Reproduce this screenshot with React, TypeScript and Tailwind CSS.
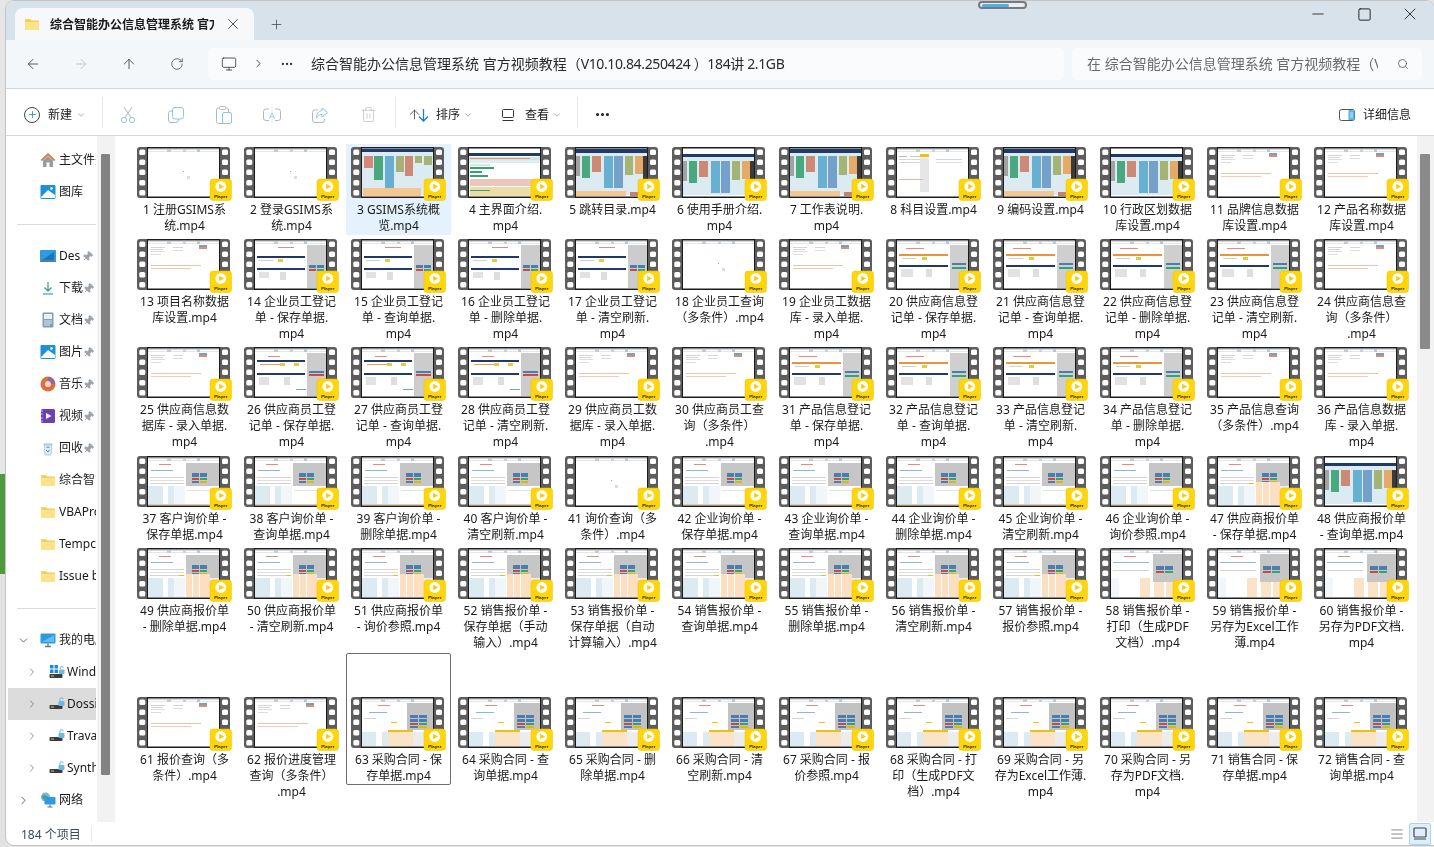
import React from "react";
import { ArrowLeft, ArrowRight, ArrowUp, RotateCw, Monitor, ChevronRight, ChevronDown, Ellipsis, Plus, Trash2, Search, X, Minus, Square, Pin, AlignJustify } from "lucide-react";

const FONT = "font-['Noto_Sans','Noto_Sans_CJK_SC',sans-serif]";

type R = [number, number, number, number, string];

const top: R[] = [[11, 2, 71, 1, "#d4d8dc"], [11, 4, 71, 1, "#e4e6e8"], [30, 2, 4, 3, "#c4ccd4"], [46, 2, 3, 3, "#c8d2dc"], [60, 2, 3, 3, "#b8c8d8"]];
const dashCols = (o: number): R[] => [
  [11, 9 + o, 4, 20, "#a2a2a2"], [17, 9 + o, 8, 22, "#4aa87e"], [27, 9 + o, 9, 16, "#cc8a76"],
  [39, 9 + o, 9, 32, "#68b0d2"], [49, 9 + o, 9, 32, "#74a0ca"], [60, 9 + o, 8, 19, "#a4b474"],
  [70, 9 + o, 8, 18, "#e6aa68"], [78, 9 + o, 4, 34, "#3a3a3a"],
];
const greyRight: R[] = [[63, 6, 19, 43, "#cccccc"], [65, 26, 7, 3, "#4b7db0"], [73, 26, 7, 3, "#4b7db0"], [65, 30, 7, 2, "#c94b3c"], [73, 30, 7, 2, "#35a274"]];
const quoteBase: R[] = [
  ...top, [49, 7, 33, 23, "#c6c6c6"], [55, 17, 7, 4, "#4b7db0"], [63, 17, 7, 4, "#4b7db0"], [55, 22, 7, 2, "#c94b3c"], [63, 22, 7, 2, "#35a274"],
  [55, 25, 7, 2, "#4b7db0"], [63, 25, 7, 2, "#e8b400"], [22, 8, 12, 1, "#e38b7c"], [14, 14, 22, 1, "#8ab8d8"], [13, 21, 34, 1, "#d4d4d4"], [13, 24, 34, 1, "#dedede"], [13, 27, 34, 1, "#d4d4d4"],
];
const THUMBS: Record<string, R[]> = {
  a: [...top, [46, 24, 1, 1, "#8aa8d0"], [50, 29, 3, 3, "#dddddd"]],
  c: [[11, 2, 71, 46, "#dcebf2"], [11, 2, 71, 3, "#1f3a68"], [13, 9, 9, 12, "#d9867a"], [23, 9, 9, 24, "#4aa87e"], [34, 9, 9, 32, "#68aed4"], [45, 9, 8, 16, "#a6b17a"], [54, 9, 8, 20, "#cc8a76"], [64, 9, 7, 7, "#a4b474"], [73, 9, 8, 9, "#a4b474"], [12, 41, 58, 8, "#f4c692"]],
  m: [[11, 2, 71, 4, "#ffffff"], [11, 6, 71, 3, "#1f3a68"], [11, 10, 71, 3, "#cfe3ee"], [11, 13, 71, 3, "#dbeef5"], [12, 11, 60, 1, "#e5996b"], [12, 17, 20, 2, "#d8ead0"], [12, 20, 24, 2, "#35a274"], [12, 24, 12, 2, "#35a274"], [12, 28, 18, 2, "#35a274"], [12, 32, 70, 7, "#ecc6bc"], [12, 40, 70, 9, "#ecdca8"], [12, 43, 20, 1, "#35a274"]],
  d: [[11, 2, 71, 46, "#dcebf2"], [11, 2, 71, 4, "#1f3a68"], ...dashCols(0), [11, 44, 50, 5, "#f4c692"], [65, 45, 15, 4, "#c9806a"]],
  e: [[11, 2, 71, 46, "#dcebf2"], [11, 2, 71, 5, "#ffffff"], [11, 7, 71, 3, "#1f3a68"], ...dashCols(5)],
  s: [...top, [13, 9, 8, 1, "#bbbbbb"], [24, 9, 12, 1, "#c8c8c8"], [13, 12, 24, 1, "#d8d8d8"], [13, 15, 24, 1, "#d8d8d8"], [34, 7, 9, 3, "#f0c010"], [34, 11, 9, 34, "#e6e6e6"], [13, 32, 24, 1, "#eeb8a0"], [50, 12, 26, 1, "#d4d4d4"], [50, 15, 26, 1, "#dedede"]],
  t: [...top, [14, 8, 14, 1, "#d4d4d4"], [14, 10, 12, 1, "#d4d4d4"], [14, 12, 14, 1, "#dcdcdc"], [14, 15, 10, 1, "#dcdcdc"], [36, 8, 10, 1, "#d4d4d4"], [36, 11, 10, 1, "#dcdcdc"], [62, 6, 8, 2, "#6f9fd0"], [62, 8, 8, 2, "#e09060"], [14, 26, 50, 1, "#edc0a8"], [14, 29, 40, 1, "#f0ccb8"]],
  f: [...top, ...greyRight, [34, 8, 16, 1, "#e38b7c"], [13, 17, 48, 2, "#1f3a68"], [13, 29, 48, 2, "#1f3a68"], [15, 21, 14, 1, "#cfcfcf"], [34, 20, 5, 3, "#e8c840"], [15, 33, 10, 6, "#e2e2e2"], [36, 33, 6, 8, "#dedede"]],
  n: [...top, [63, 6, 19, 43, "#cccccc"], [65, 24, 15, 2, "#4b7db0"], [65, 27, 15, 2, "#c94b3c"], [24, 9, 12, 1, "#e38b7c"], [13, 13, 48, 2, "#1f3a68"], [13, 26, 48, 2, "#1f3a68"], [16, 17, 24, 1, "#e8a060"], [36, 16, 5, 3, "#e8c840"], [50, 16, 5, 3, "#e8c840"], [15, 30, 10, 8, "#e2e2e2"], [40, 30, 6, 8, "#dedede"], [52, 42, 10, 1, "#6f9fd0"]],
  o: [...top, [64, 6, 18, 43, "#cfcfcf"], [66, 24, 14, 2, "#4b7db0"], [66, 28, 14, 2, "#35a274"], [20, 9, 18, 1, "#e38b7c"], [13, 15, 49, 2, "#e8943a"], [13, 26, 49, 2, "#1f3a68"], [16, 19, 14, 1, "#cfcfcf"], [36, 18, 5, 3, "#e8c840"], [15, 30, 12, 8, "#e2e2e2"], [40, 30, 6, 8, "#dedede"]],
  q: [...quoteBase, [11, 30, 15, 19, "#dcebf2"], [26, 30, 5, 19, "#ffffff"], [31, 30, 6, 19, "#dcebf2"], [37, 30, 11, 19, "#f0f6fa"], [49, 30, 33, 19, "#ffffff"], [50, 34, 30, 1, "#e2e2e2"], [11, 48, 71, 1, "#f0c89c"]],
  r: [...quoteBase, [49, 26, 24, 23, "#fbdfc0"], [73, 30, 9, 19, "#eeeeee"], [55, 26, 1, 23, "#ffffff"], [62, 26, 1, 23, "#ffffff"], [11, 30, 15, 19, "#dcebf2"], [26, 30, 5, 19, "#ffffff"], [31, 30, 6, 19, "#dcebf2"], [37, 30, 11, 19, "#f0f6fa"], [42, 27, 5, 1, "#f0c010"]],
  p: [...top, [53, 6, 29, 28, "#c6c6c6"], [56, 18, 8, 4, "#4b7db0"], [65, 18, 8, 4, "#4b7db0"], [56, 23, 8, 2, "#c94b3c"], [65, 23, 8, 2, "#35a274"], [24, 8, 12, 1, "#e38b7c"], [13, 14, 36, 1, "#8ab8d8"], [13, 22, 36, 1, "#d4d4d4"], [11, 30, 8, 19, "#f0f6fa"], [40, 30, 10, 19, "#fbe3c8"], [54, 34, 10, 15, "#fbe3c8"], [66, 34, 8, 15, "#fbe3c8"]],
  k: [...top, [56, 6, 26, 27, "#c2c2c2"], [59, 18, 8, 3, "#4b7db0"], [68, 18, 8, 3, "#4b7db0"], [59, 22, 8, 3, "#4b7db0"], [68, 22, 8, 3, "#4b7db0"], [59, 26, 8, 2, "#c94b3c"], [68, 26, 8, 2, "#35a274"], [59, 29, 8, 2, "#4b7db0"], [68, 29, 8, 2, "#e8b400"], [27, 8, 12, 1, "#e38b7c"], [18, 15, 18, 1, "#8ab8d8"], [13, 21, 12, 1, "#d4d4d4"], [40, 25, 6, 1, "#f0c010"], [11, 35, 14, 14, "#dcebf2"], [25, 35, 6, 14, "#ffffff"], [31, 35, 6, 14, "#dcebf2"], [37, 35, 25, 14, "#fbe3c8"], [37, 33, 25, 2, "#f0c010"], [62, 35, 20, 14, "#ececec"]],
};

const HOLES = [2.5, 12.5, 22.5, 33, 43];

function Thumb({ kind }: { kind: string }) {
  return (
    <svg width="95" height="54" viewBox="0 0 95 54" className="block">
      <rect x="0" y="0" width="93" height="51" rx="3" fill="#5d5d5d" />
      {HOLES.map((y) => (
        <g key={y}>
          <rect x="2.3" y={y} width="6" height="5.5" rx="1.6" fill="#fff" />
          <rect x="85" y={y} width="6" height="5.5" rx="1.6" fill="#fff" />
        </g>
      ))}
      <rect x="10" y="0" width="73" height="51" fill="#1c1c1c" />
      <rect x="11" y="1.5" width="71" height="48" fill="#fff" />
      {THUMBS[kind].map((r, i) => (
        <rect key={i} x={r[0]} y={r[1]} width={r[2]} height={r[3]} fill={r[4]} />
      ))}
      <rect x="73" y="32" width="21.5" height="21.5" rx="3" fill="#ffd60a" stroke="#e8c30a" strokeWidth="0.5" />
      <circle cx="83.8" cy="39.5" r="5.4" fill="#fff" />
      <path d="M82.2 36.8 L87 39.5 L82.2 42.2 Z" fill="#ffc800" />
      <text x="83.8" y="50.6" textAnchor="middle" fontSize="4.4" fontWeight="700" fontFamily="Liberation Sans, sans-serif" fill="#222">Player</text>
    </svg>
  );
}

const KINDS = "aacmdedsdett" + "tffffatoooot" + "tnnnttoooott" + "qqqqaqqqqqre" + "rrrrrrrrrppp" + "ttkkkkkkkkkk";

const NAMES = [
  "1 注册GSIMS系|统.mp4", "2 登录GSIMS系|统.mp4", "3 GSIMS系统概|览.mp4", "4 主界面介绍.|mp4", "5 跳转目录.mp4", "6 使用手册介绍.|mp4", "7 工作表说明.|mp4", "8 科目设置.mp4", "9 编码设置.mp4", "10 行政区划数据|库设置.mp4", "11 品牌信息数据|库设置.mp4", "12 产品名称数据|库设置.mp4",
  "13 项目名称数据|库设置.mp4", "14 企业员工登记|单 - 保存单据.|mp4", "15 企业员工登记|单 - 查询单据.|mp4", "16 企业员工登记|单 - 删除单据.|mp4", "17 企业员工登记|单 - 清空刷新.|mp4", "18 企业员工查询|（多条件）.mp4", "19 企业员工数据|库 - 录入单据.|mp4", "20 供应商信息登|记单 - 保存单据.|mp4", "21 供应商信息登|记单 - 查询单据.|mp4", "22 供应商信息登|记单 - 删除单据.|mp4", "23 供应商信息登|记单 - 清空刷新.|mp4", "24 供应商信息查|询（多条件）|.mp4",
  "25 供应商信息数|据库 - 录入单据.|mp4", "26 供应商员工登|记单 - 保存单据.|mp4", "27 供应商员工登|记单 - 查询单据.|mp4", "28 供应商员工登|记单 - 清空刷新.|mp4", "29 供应商员工数|据库 - 录入单据.|mp4", "30 供应商员工查|询（多条件）|.mp4", "31 产品信息登记|单 - 保存单据.|mp4", "32 产品信息登记|单 - 查询单据.|mp4", "33 产品信息登记|单 - 清空刷新.|mp4", "34 产品信息登记|单 - 删除单据.|mp4", "35 产品信息查询|（多条件）.mp4", "36 产品信息数据|库 - 录入单据.|mp4",
  "37 客户询价单 -|保存单据.mp4", "38 客户询价单 -|查询单据.mp4", "39 客户询价单 -|删除单据.mp4", "40 客户询价单 -|清空刷新.mp4", "41 询价查询（多|条件）.mp4", "42 企业询价单 -|保存单据.mp4", "43 企业询价单 -|查询单据.mp4", "44 企业询价单 -|删除单据.mp4", "45 企业询价单 -|清空刷新.mp4", "46 企业询价单 -|询价参照.mp4", "47 供应商报价单|- 保存单据.mp4", "48 供应商报价单|- 查询单据.mp4",
  "49 供应商报价单|- 删除单据.mp4", "50 供应商报价单|- 清空刷新.mp4", "51 供应商报价单|- 询价参照.mp4", "52 销售报价单 -|保存单据（手动|输入）.mp4", "53 销售报价单 -|保存单据（自动|计算输入）.mp4", "54 销售报价单 -|查询单据.mp4", "55 销售报价单 -|删除单据.mp4", "56 销售报价单 -|清空刷新.mp4", "57 销售报价单 -|报价参照.mp4", "58 销售报价单 -|打印（生成PDF|文档）.mp4", "59 销售报价单 -|另存为Excel工作|薄.mp4", "60 销售报价单 -|另存为PDF文档.|mp4",
  "61 报价查询（多|条件）.mp4", "62 报价进度管理|查询（多条件）|.mp4", "63 采购合同 - 保|存单据.mp4", "64 采购合同 - 查|询单据.mp4", "65 采购合同 - 删|除单据.mp4", "66 采购合同 - 清|空刷新.mp4", "67 采购合同 - 报|价参照.mp4", "68 采购合同 - 打|印（生成PDF文|档）.mp4", "69 采购合同 - 另|存为Excel工作薄.|mp4", "70 采购合同 - 另|存为PDF文档.|mp4", "71 销售合同 - 保|存单据.mp4", "72 销售合同 - 查|询单据.mp4",
];

function Cell({ name, kind, index }: { name: string; kind: string; index: number }) {
  const lastRow = index >= 60;
  const selected = index === 2;
  const focused = index === 62;
  return (
    <div className={`flex flex-col items-center ${lastRow ? "pt-[44px]" : "pt-[3px]"} ${selected ? "bg-[#e3f2fd] h-[91px]" : ""} ${focused ? "rounded-[2px] outline outline-1 -outline-offset-1 outline-[#6e6e6e]" : ""}`}>
      <div className="h-[54px] w-[95px]">
        <Thumb kind={kind} />
      </div>
      <div className="pt-px text-center text-[12px] leading-[16px] text-[#1a1a1a]">
        {name.split("|").map((l, i) => (
          <div key={i} className="whitespace-nowrap">{l}</div>
        ))}
      </div>
    </div>
  );
}

const S = ({ children }: { children: React.ReactNode }) => (
  <svg width="16" height="16" viewBox="0 0 16 16" className="shrink-0">{children}</svg>
);
const Img = () => (
  <S><rect x="0.5" y="1" width="15" height="14" rx="1" fill="#1b8fe0" /><path d="M1 13 L8 6 L15 11 V14 H1Z" fill="#fff" /><circle cx="11.5" cy="4.5" r="1.4" fill="#cfe9fb" /></S>
);
const Folder = () => (
  <S><path d="M1 4 a1 1 0 0 1 1-1 h4 l1.5 1.5 H14 a1 1 0 0 1 1 1 V13 a1 1 0 0 1-1 1 H2 a1 1 0 0 1-1-1Z" fill="#f6cf5a" /><path d="M1 6 H15 V13 a1 1 0 0 1-1 1 H2 a1 1 0 0 1-1-1Z" fill="#fbe38a" /></S>
);
const Drive = () => (
  <S><rect x="0.5" y="9" width="13" height="4" rx="1" fill="#3c3c3c" /><rect x="2" y="10.5" width="3" height="1" fill="#9be26a" /><rect x="9.5" y="5" width="6" height="5" rx="1" fill="#6fb7e8" /><path d="M11 5 V3.2 a1.6 1.6 0 0 1 3.2 0" stroke="#6fb7e8" fill="none" /></S>
);
const ICONS: Record<string, React.ReactNode> = {
  home: <S><path d="M8 1 L15.5 8 L14 9 L8 3.6 L2 9 L0.5 8Z" fill="#d87a3a" /><path d="M3 8.5 L8 4 L13 8.5 V15 H9.5 V10.5 H6.5 V15 H3Z" fill="#9a9a9a" /></S>,
  img: <Img />,
  desk: <S><rect x="0" y="2" width="16" height="11" rx="1" fill="#2f9ae0" /><path d="M2 12 L14 4 V12Z" fill="#1876c0" /><rect x="0" y="12.5" width="16" height="1.5" fill="#5a7a90" /></S>,
  down: <S><path d="M8 2 V11 M4.5 7.5 L8 11 L11.5 7.5" stroke="#2fa37c" strokeWidth="1.2" fill="none" /><path d="M3 14 H13" stroke="#5bb8d0" strokeWidth="1.4" /></S>,
  doc: <S><rect x="2.5" y="0.5" width="11" height="15" rx="1" fill="#7f9fb8" /><rect x="4" y="2" width="8" height="5" fill="#eaf1f6" /><path d="M4 9 H12 M4 11 H12 M4 13 H10" stroke="#eaf1f6" strokeWidth="0.9" /></S>,
  music: <S><circle cx="8" cy="8" r="7.5" fill="#d9713f" /><circle cx="8" cy="8" r="3" fill="#f4d7c4" /><path d="M8 1 A7 7 0 0 1 15 8 H11 A3 3 0 0 0 8 5Z" fill="#8b6aa8" /></S>,
  video: <S><rect x="1" y="1" width="14" height="14" rx="1.5" fill="#6a40b8" /><path d="M6 5 L11.5 8 L6 11Z" fill="#fff" /><path d="M1 3 H3 M1 6 H3 M1 10 H3 M1 13 H3" stroke="#cbb8ea" /></S>,
  bin: <S><path d="M4 5 H12 L11 15 H5Z" fill="#dfeaf2" stroke="#9bb3c4" strokeWidth="0.6" /><path d="M6.5 8 L8 6.5 L9.5 8 M9.5 10 L8 12 L6 10" stroke="#2f8fd8" fill="none" /><path d="M3.5 4 H12.5" stroke="#9bb3c4" /></S>,
  folder: <Folder />,
  pc: <S><rect x="0.5" y="1.5" width="15" height="10" rx="1" fill="#2f9ae0" /><path d="M2 10 L14 3 V10Z" fill="#63bdf0" /><path d="M8 11.5 V14 M5 14.5 H11" stroke="#5a7a90" strokeWidth="1.3" /></S>,
  win: <S><path d="M1 1 H4.5 V4.5 H1Z M5.5 1 H9 V4.5 H5.5Z M1 5.5 H4.5 V9 H1Z M5.5 5.5 H9 V9 H5.5Z" fill="#1e88d8" /><rect x="0.5" y="10" width="13" height="4" rx="1" fill="#3c3c3c" /><rect x="2" y="11.5" width="3" height="1" fill="#9be26a" /><rect x="10" y="5.5" width="5.5" height="4.5" rx="1" fill="#6fb7e8" /><path d="M11.2 5.5 V4 a1.5 1.5 0 0 1 3 0" stroke="#6fb7e8" fill="none" /></S>,
  drive: <Drive />,
  net: <S><circle cx="5.5" cy="5" r="4.5" fill="#6fb7e8" /><path d="M2 4 Q5 2 8 5 Q6 8 3 7Z" fill="#55a34a" /><rect x="4.5" y="5" width="11" height="7.5" rx="0.8" fill="#2f9ae0" /><path d="M10 12.5 V15 M7.5 15 H12.5" stroke="#5a7a90" strokeWidth="1.2" /></S>,
};

function Side({ icon, text, pin, level, open, active }: { icon: string; text: string; pin?: boolean; level?: number; open?: boolean; active?: boolean }) {
  const prefix = level === 1 ? (
    <span className="flex w-[33px] shrink-0 justify-center text-[#444]">
      {open ? <ChevronDown size={13} strokeWidth={1.5} /> : <ChevronRight size={13} strokeWidth={1.5} />}
    </span>
  ) : level === 2 ? (
    <span className={`flex shrink-0 justify-end pr-[11px] text-[#666] ${active ? "w-[41px]" : "w-[42px]"}`}>
      <ChevronRight size={12} strokeWidth={1.5} />
    </span>
  ) : (
    <span className="w-[33px] shrink-0" />
  );
  return (
    <div className={`flex h-8 items-center overflow-hidden whitespace-nowrap text-[12px] text-[#1a1a1a] ${active ? "ml-px w-[88px] bg-[#dcdcdc]" : "w-[89px]"}`}>
      {prefix}
      <span className="flex">{ICONS[icon]}</span>
      <span className={`${level === 2 ? "ml-[2px]" : "ml-[3px]"} ${pin ? "w-[24px] shrink-0 overflow-hidden" : ""}`}>{text}</span>
      {pin && <Pin size={11} className={`shrink-0 rotate-45 fill-[#9aa3ab] text-[#9aa3ab] ${text === "Des" ? "-ml-[1px]" : "ml-0"}`} />}
    </div>
  );
}

const GREY = "#aeb8c0";
const BLUE = "#8cc4ea";
function ToolIcon({ name }: { name: string }) {
  if (name === "cut")
    return (
      <svg width="16" height="18" viewBox="0 0 16 18" fill="none">
        <path d="M5 11.5 L12 1 M11 11.5 L4 1" stroke={GREY} strokeWidth="1" />
        <circle cx="4" cy="14" r="2.6" stroke={BLUE} strokeWidth="1" />
        <circle cx="12" cy="14" r="2.6" stroke={BLUE} strokeWidth="1" />
      </svg>
    );
  if (name === "copy")
    return (
      <svg width="16" height="16" viewBox="0 0 16 16" fill="none">
        <rect x="0.5" y="4" width="10" height="11.5" rx="2.5" stroke={GREY} />
        <rect x="4.5" y="0.5" width="11" height="11.5" rx="2.5" stroke={BLUE} fill="#fff" />
      </svg>
    );
  if (name === "paste")
    return (
      <svg width="16" height="18" viewBox="0 0 16 18" fill="none">
        <rect x="0.5" y="2" width="12" height="15.5" rx="2" stroke={GREY} />
        <rect x="3.5" y="0.5" width="6" height="3" rx="1" fill="#fff" stroke={GREY} />
        <rect x="6.5" y="6.5" width="9" height="11" rx="1.5" fill="#fff" stroke={BLUE} />
      </svg>
    );
  if (name === "rename")
    return (
      <svg width="18" height="18" viewBox="0 0 18 18" fill="none">
        <path d="M6 3 H3 a2.5 2.5 0 0 0-2.5 2.5 V12 a2.5 2.5 0 0 0 2.5 2.5 H6 M12 3 H15 a2.5 2.5 0 0 1 2.5 2.5 V12 a2.5 2.5 0 0 1-2.5 2.5 H12" stroke={GREY} />
        <text x="9" y="12.5" textAnchor="middle" fontSize="9" fill="#8cc4ea" fontFamily="Liberation Sans, sans-serif">A</text>
        <path d="M9 1 V17" stroke={BLUE} strokeWidth="0.7" strokeOpacity="0.5" />
      </svg>
    );
  if (name === "share")
    return (
      <svg width="16" height="16" viewBox="0 0 16 16" fill="none">
        <path d="M6 3 H3 a2.5 2.5 0 0 0-2.5 2.5 V13 a2.5 2.5 0 0 0 2.5 2.5 H10 a2.5 2.5 0 0 0 2.5-2.5 V12" stroke={GREY} />
        <path d="M10 1 L15.5 5.5 L10 10 V7.5 C7 7.5 5.5 9 4.5 11 C4.5 7 6.5 4 10 3.5Z" stroke={BLUE} fill="#fff" />
      </svg>
    );
  return <Trash2 size={17} strokeWidth={1} className="text-[#b4bcc2]" />;
}

function Tool({ name }: { name: string }) {
  return <div className="flex h-8 w-12 items-center justify-center"><ToolIcon name={name} /></div>;
}
const Sep = () => <div className="-mt-[5px] h-[31px] w-px bg-[#e6e8ea]" />;

export default function App() {
  return (
    <div className={`flex h-[847px] w-[1434px] overflow-hidden bg-[#e4e4e4] blur-[0.3px] ${FONT}`}>
      <div className="flex w-[6px] shrink-0 flex-col">
        <div className="h-[474px] bg-[#e6e6e6]" />
        <div className="h-[100px] bg-[#4f9a3c]" />
        <div className="flex-1 bg-[#e2e2e2]" />
      </div>
      <div className="relative mb-[2px] mt-px flex min-w-0 flex-1 flex-col overflow-hidden rounded-t-lg rounded-bl-lg bg-white shadow-[0_0_0_1px_#c4c4c4]">
        {/* title bar */}
        <div className="flex h-[39px] shrink-0 items-end bg-[#d8e2ea] pl-[9px]">
          <div className="flex h-[32px] w-[239px] items-center rounded-t-lg bg-[#f6f8fa] pl-[9px]">
            <Folder />
            <div className="ml-[10px] w-[164px] overflow-hidden whitespace-nowrap pt-[2px] text-[12px] font-semibold text-[#1a1a1a]">综合智能办公信息管理系统 官方视频教程</div>
            <X size={18} strokeWidth={1.1} className="ml-[10px] text-[#333]" />
          </div>
          <div className="flex h-[32px] w-[45px] items-center justify-center text-[#444]">
            <Plus size={15} strokeWidth={1.2} />
          </div>
          <div className="flex-1" />
          <div className="mr-px flex h-[26px] w-[138px] items-center self-start text-[#1a1a1a]">
            <div className="flex h-full w-[46px] items-center justify-center"><Minus size={18} strokeWidth={1.1} /></div>
            <div className="flex h-full w-[46px] items-center justify-center"><Square size={15} strokeWidth={1.5} /></div>
            <div className="flex h-full w-[46px] items-center justify-center"><X size={20} strokeWidth={1.05} /></div>
          </div>
        </div>
        {/* address bar */}
        <div className="flex h-[49px] shrink-0 items-center border-b border-[#cdd5dc] bg-[#f4f7fa] pb-px pl-[3px] text-[#333]">
          <div className="flex w-[48px] justify-center"><ArrowLeft size={16} strokeWidth={1.2} /></div>
          <div className="flex w-[48px] justify-center text-[#b9c0c6]"><ArrowRight size={16} strokeWidth={1.2} /></div>
          <div className="flex w-[48px] justify-center"><ArrowUp size={16} strokeWidth={1.2} /></div>
          <div className="flex w-[48px] justify-center"><RotateCw size={14} strokeWidth={1.2} /></div>
          <div className="ml-[7px] flex h-[32px] w-[856px] items-center rounded-[5px] bg-[#fafbfc] pl-[13px]">
            <Monitor size={16} strokeWidth={1.2} />
            <ChevronRight size={13} strokeWidth={1.6} className="ml-[15px]" />
            <Ellipsis size={14} strokeWidth={2} className="ml-[15px]" />
            <span className="ml-[17px] whitespace-nowrap text-[14px] text-[#2a2a2a]">综合智能办公信息管理系统 官方视频教程（<span className="tracking-[-0.37px]">V10.10.84.250424 ）184讲 2.1GB</span></span>
          </div>
          <div className="ml-[8px] flex h-[32px] w-[350px] items-center rounded-[5px] bg-[#fafbfc] pl-[15px]">
            <span className="w-[291px] overflow-hidden whitespace-nowrap text-[14px] text-[#6a6a6a]">在 综合智能办公信息管理系统 官方视频教程（V10</span>
            <Search size={12} strokeWidth={1.4} className="ml-[19px] text-[#444]" />
          </div>
        </div>
        {/* toolbar */}
        <div className="flex h-[47px] shrink-0 items-center border-b border-[#d5d9dd] pt-[5px] text-[12px] text-[#1a1a1a]">
          <div className="ml-[18px] flex h-4 w-4 items-center justify-center rounded-full border border-[#444] text-[#1a7ed0]"><Plus size={11} strokeWidth={1.6} /></div>
          <span className="ml-[8px]">新建</span>
          <ChevronDown size={10} strokeWidth={1.2} className="ml-[4px] text-[#555]" />
          <div className="ml-[16px]"><Sep /></div>
          <div className="flex pl-[1px]">
            <Tool name="cut" />
            <Tool name="copy" />
            <Tool name="paste" />
            <Tool name="rename" />
            <Tool name="share" />
            <Tool name="trash" />
          </div>
          <div className="ml-[3px]"><Sep /></div>
          <span className="ml-[11px] flex text-[#333]"><ArrowUp size={15} strokeWidth={1.2} className="-mr-[6px]" /><svg width="15" height="16" viewBox="0 0 15 16"><path d="M7.5 2 V14 M3 9.5 L7.5 14 L12 9.5" stroke="#1a7ed0" strokeWidth="1.3" fill="none" /></svg></span>
          <span className="ml-[5px]">排序</span>
          <ChevronDown size={10} strokeWidth={1.2} className="ml-[3px] text-[#555]" />
          <svg width="14" height="14" viewBox="0 0 14 14" className="ml-[28px]"><rect x="1.5" y="1.5" width="11" height="8" rx="1" fill="none" stroke="#333" /><path d="M1.5 12.5 H12.5" stroke="#333" /></svg>
          <span className="ml-[10px]">查看</span>
          <ChevronDown size={10} strokeWidth={1.2} className="ml-[3px] text-[#555]" />
          <div className="ml-[15px]"><Sep /></div>
          <Ellipsis size={17} strokeWidth={2.4} className="ml-[16px] text-[#222]" />
          <div className="flex-1" />
          <svg width="17" height="14" viewBox="0 0 17 14"><rect x="0.5" y="1.5" width="15" height="11" rx="2" fill="none" stroke="#555" /><rect x="9.5" y="2" width="6" height="10" fill="#5ab4e8" /><path d="M11 5 H14 M11 7 H14 M11 9 H14" stroke="#fff" strokeWidth="0.7" /></svg>
          <span className="ml-[7px] mr-[23px]">详细信息</span>
        </div>
        {/* main */}
        <div className="flex min-h-0 flex-1">
          <div className="w-[91px] shrink-0 overflow-hidden pl-px pt-[8px]">
            <Side icon="home" text="主文件夹" />
            <Side icon="img" text="图库" />
            <div className="flex h-8 items-center pl-[10px] pr-[1px]"><div className="h-px w-full bg-[#dcdcdc]" /></div>
            <Side icon="desk" text="Des" pin />
            <Side icon="down" text="下载" pin />
            <Side icon="doc" text="文档" pin />
            <Side icon="img" text="图片" pin />
            <Side icon="music" text="音乐" pin />
            <Side icon="video" text="视频" pin />
            <Side icon="bin" text="回收" pin />
            <Side icon="folder" text="综合智能办公" />
            <Side icon="folder" text="VBAProject" />
            <Side icon="folder" text="Tempcode" />
            <Side icon="folder" text="Issue box" />
            <div className="flex h-8 items-center pl-[10px] pr-[1px]"><div className="h-px w-full bg-[#dcdcdc]" /></div>
            <Side icon="pc" text="我的电脑" level={1} open />
            <Side icon="win" text="Windows" level={2} />
            <Side icon="drive" text="Dossier" level={2} active />
            <Side icon="drive" text="Travail" level={2} />
            <Side icon="drive" text="Synthese" level={2} />
            <Side icon="net" text="网络" level={1} />
          </div>
          <div className="w-[18px] shrink-0 bg-[#f2f2f2] pl-[4px] pt-[18px]">
            <div className="h-[621px] w-[9px] rounded-[1px] bg-[#828282]" />
          </div>
          <div className="min-w-0 flex-1 pl-[17px] pt-2">
            <div className="grid grid-cols-[repeat(12,105px)] grid-rows-[92px_108px_109px_92px_108px_132px] gap-x-[2px]">
              {NAMES.map((n, i) => (
                <Cell key={n} name={n} kind={KINDS[i]} index={i} />
              ))}
            </div>
          </div>
          <div className="w-[17px] shrink-0 bg-[#f2f2f2] pl-[3px] pt-[18px]">
            <div className="h-[195px] w-[10px] rounded-[1px] bg-[#8a8a8a]" />
          </div>
        </div>
        {/* status */}
        <div className="flex h-[23px] shrink-0 items-center text-[12px] text-[#3a4a5a]">
          <span className="ml-[15px] w-[70px] pt-[2px]">184 个项目</span>
          <div className="h-4 w-px bg-[#e8e8e8]" />
          <div className="flex-1" />
          <AlignJustify size={14} strokeWidth={1.2} className="mr-[5px] text-[#555]" />
          <div className="mr-[3px] flex h-[22px] w-[22px] items-center justify-center rounded-[2px] border border-[#a8d4f0] bg-[#dceffb]">
            <svg width="14" height="13" viewBox="0 0 14 13"><rect x="1" y="1" width="12" height="9" rx="1" fill="none" stroke="#444" strokeWidth="1.2" /><path d="M1 12 H13" stroke="#444" /></svg>
          </div>
        </div>
        {/* overlay pill */}
        <div className="absolute left-[972px] top-0 flex h-[8px] w-[49px] items-center rounded-full border-2 border-[#7a7a7a] bg-[#e8eef3] px-[2px]">
          <div className="h-[3px] w-[27px] rounded-full bg-[#4db0e6]" />
        </div>
      </div>
    </div>
  );
}
